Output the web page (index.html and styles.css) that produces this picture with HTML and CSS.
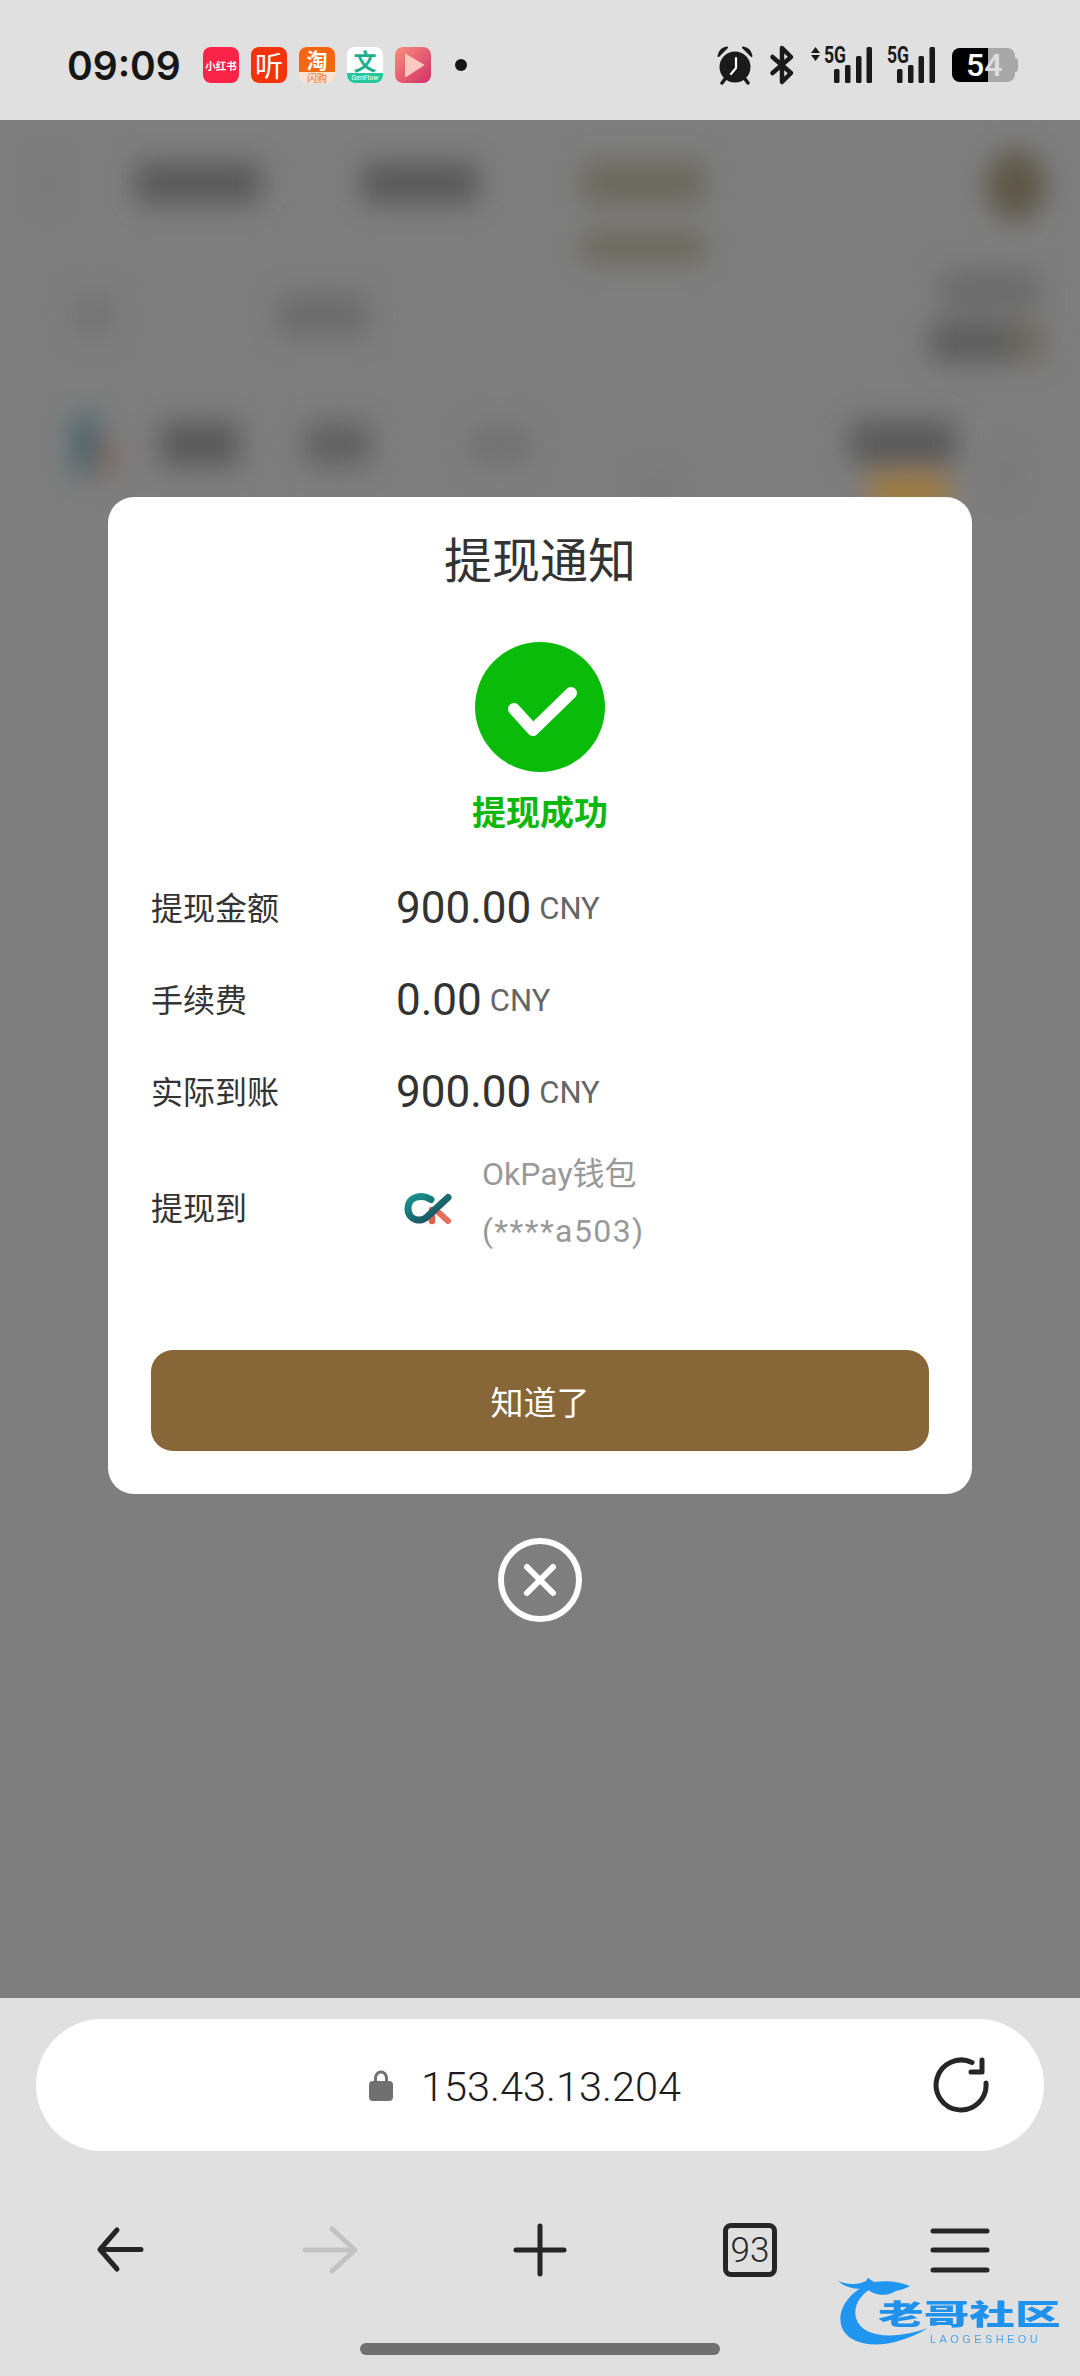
FILE: index.html
```html
<!DOCTYPE html>
<html lang="zh-CN">
<head>
    <meta charset="UTF-8">
    <meta name="viewport" content="width=device-width, initial-scale=1.0">
    <title>提现通知</title>
    <link rel="stylesheet" href="styles.css">
</head>
<body>
    <div class="status-bar">
        <div class="status-left">
            <span class="time">09:09</span>
            <div class="apps">
                <span class="app app-red">小红书</span>
                <span class="app app-ting">听</span>
                <span class="app app-tao"><b>淘</b><i>闪购</i></span>
                <span class="app app-wen"><b>文</b><i>GenFlow</i></span>
                <span class="app app-play">
                    <svg width="36" height="36" viewBox="0 0 36 36"><path d="M11 8 L28 18 L11 29 Z" fill="#ffc9c0" stroke="#ffc9c0" stroke-width="2" stroke-linejoin="round"/></svg>
                </span>
            </div>
            <span class="dot"></span>
        </div>
        <div class="status-right">
            <svg class="alarm" width="36" height="38" viewBox="0 0 36 38">
                <circle cx="18" cy="21" r="15.5" fill="#1a1a1a"/>
                <path d="M1.5 10 Q3 2.500 10 1.500 Z M34.500 10 Q33 2.500 26 1.500 Z" fill="#1a1a1a" stroke="#1a1a1a" stroke-width="2" stroke-linejoin="round"/>
                <path d="M8 33 L5 37 M28 33 L31 37" stroke="#1a1a1a" stroke-width="3.500" stroke-linecap="round"/>
                <path d="M19 12 V22 L14 28" fill="none" stroke="#fff" stroke-width="2.200" stroke-linecap="round" stroke-linejoin="round"/>
            </svg>
            <svg class="bluetooth" width="24" height="38" viewBox="0 0 24 38">
                <path d="M2.500 11 L21 27 L12 36 V2 L21 11 L2.500 27" fill="none" stroke="#1a1a1a" stroke-width="4.500" stroke-linecap="round" stroke-linejoin="round"/>
            </svg>
            <svg class="signal-a" width="61" height="38" viewBox="0 0 61 38">
                <path d="M4.500 1 L9 7 H0 Z M4.500 15 L9 9 H0 Z" fill="#1a1a1a"/>
                <text x="13" y="17" class="five-g" textLength="22" lengthAdjust="spacingAndGlyphs">5G</text>
                <rect x="23" y="23" width="5.500" height="14" rx="1.500" fill="#1a1a1a"/>
                <rect x="34" y="19" width="5.500" height="18" rx="1.500" fill="#1a1a1a"/>
                <rect x="45" y="10" width="5.500" height="27" rx="1.500" fill="#1a1a1a"/>
                <rect x="55.500" y="1" width="5.500" height="36" rx="1.500" fill="#1a1a1a"/>
            </svg>
            <svg class="signal-b" width="48" height="38" viewBox="0 0 48 38">
                <text x="0" y="17" class="five-g" textLength="22" lengthAdjust="spacingAndGlyphs">5G</text>
                <rect x="10" y="23" width="5.500" height="14" rx="1.500" fill="#1a1a1a"/>
                <rect x="21" y="19" width="5.500" height="18" rx="1.500" fill="#1a1a1a"/>
                <rect x="31.500" y="10" width="5.500" height="27" rx="1.500" fill="#1a1a1a"/>
                <rect x="42.500" y="1" width="5.500" height="36" rx="1.500" fill="#1a1a1a"/>
            </svg>
            <div class="battery">
                <div class="battery-body">
                    <span class="battery-fill"></span>
                    <span class="battery-num"><b>5</b><i>4</i></span>
                </div>
                <span class="battery-nub"></span>
            </div>
        </div>
    </div>

    <div class="backdrop">
        <!-- the page behind the dialog, blurred out -->
        <svg class="backdrop-page" width="1080" height="1878" viewBox="0 0 1080 1878">
            <defs>
                <filter id="soft" x="-30%" y="-30%" width="160%" height="160%">
                    <feGaussianBlur stdDeviation="14"/>
                </filter>
            </defs>
            <g filter="url(#soft)">
                <rect x="40" y="46" width="16" height="32" fill="#747474"/>
                <rect x="135" y="42" width="126" height="42" fill="#585858"/>
                <rect x="362" y="42" width="116" height="42" fill="#585858"/>
                <rect x="582" y="42" width="123" height="42" fill="#6b675b"/>
                <rect x="582" y="114" width="123" height="26" fill="#686455"/>
                <ellipse cx="1016" cy="65" rx="30" ry="36" fill="#5d5646"/>
                <rect x="72" y="176" width="42" height="38" fill="#727272"/>
                <rect x="278" y="174" width="90" height="42" fill="#6b6b6b"/>
                <rect x="940" y="150" width="100" height="40" fill="#6a6a6a"/>
                <rect x="930" y="202" width="82" height="40" fill="#5b5b5b"/>
                <rect x="1012" y="202" width="32" height="40" fill="#6d685b"/>
                <rect x="72" y="296" width="28" height="58" fill="#48636a"/>
                <rect x="98" y="320" width="18" height="36" fill="#80665f"/>
                <rect x="160" y="302" width="80" height="44" fill="#595959"/>
                <rect x="305" y="302" width="66" height="44" fill="#606060"/>
                <rect x="470" y="308" width="60" height="34" fill="#707070"/>
                <rect x="850" y="300" width="106" height="46" fill="#5a5a5a"/>
                <rect x="870" y="354" width="78" height="38" fill="#a07c3c"/>
                <rect x="640" y="360" width="30" height="18" fill="#737373"/>
                <rect x="1000" y="336" width="10" height="36" fill="#707070"/>
            </g>
        </svg>

        <div class="modal">
            <div class="dialog">
                <h2 class="dialog-title">提现通知</h2>
                <svg class="check" width="130" height="130" viewBox="0 0 130 130">
                    <circle cx="65" cy="65" r="65" fill="#0abb0a"/>
                    <path d="M39 67 L58 88 L96 51" fill="none" stroke="#fff" stroke-width="12" stroke-linecap="round" stroke-linejoin="round"/>
                </svg>
                <p class="dialog-status">提现成功</p>

                <div class="row">
                    <span class="row-label">提现金额</span>
                    <span class="amount">900.00</span><span class="unit">CNY</span>
                </div>
                <div class="row">
                    <span class="row-label">手续费</span>
                    <span class="amount">0.00</span><span class="unit">CNY</span>
                </div>
                <div class="row">
                    <span class="row-label">实际到账</span>
                    <span class="amount">900.00</span><span class="unit">CNY</span>
                </div>
                <div class="row row-wallet">
                    <span class="row-label">提现到</span>
                    <svg class="wallet-logo" width="48" height="32" viewBox="0 0 48 32">
                        <defs>
                            <linearGradient id="okc" x1="0" y1="0" x2="1" y2="1">
                                <stop offset="0" stop-color="#1a9490"/>
                                <stop offset="1" stop-color="#1a4254"/>
                            </linearGradient>
                        </defs>
                        <path d="M28 28 V17" fill="none" stroke="#e0604c" stroke-width="6.500" stroke-linecap="round"/>
                        <path d="M33 18 L44 28" fill="none" stroke="#e56f5d" stroke-width="6" stroke-linecap="round"/>
                        <path d="M27 6.500 C18 1 4 3 4 15.500 C4 28 18 30 24 23 L44 4.500" fill="none" stroke="url(#okc)" stroke-width="7" stroke-linecap="round"/>
                    </svg>
                    <div class="wallet-name">
                        <span>OkPay钱包</span>
                        <span class="wallet-no">(****a503)</span>
                    </div>
                </div>

                <button class="dialog-btn">知道了</button>
            </div>
            <svg class="close" width="84" height="84" viewBox="0 0 84 84">
                <circle cx="42" cy="42" r="39" fill="none" stroke="#fff" stroke-width="6"/>
                <path d="M29 29 L55 55 M55 29 L29 55" stroke="#fff" stroke-width="6" stroke-linecap="round"/>
            </svg>
        </div>
    </div>

    <div class="bottom">
        <div class="url-bar">
            <svg class="lock" width="26" height="32" viewBox="0 0 26 32">
                <path d="M7.500 14 V8 A5.500 6 0 0 1 18.500 8 V14" fill="none" stroke="#707070" stroke-width="3"/>
                <rect x="1" y="11" width="24" height="20" rx="4" fill="#707070"/>
            </svg>
            <span class="url">153.43.13.204</span>
            <svg class="reload" width="60" height="60" viewBox="0 0 60 60">
                <path d="M41 7.500 A25 25 0 1 0 55 28" fill="none" stroke="#262626" stroke-width="5" stroke-linecap="round"/>
                <path d="M51 5 V17 H40" fill="none" stroke="#262626" stroke-width="5" stroke-linecap="round" stroke-linejoin="round"/>
            </svg>
        </div>

        <div class="toolbar">
            <svg width="60" height="60" viewBox="0 0 60 60" class="tool-icon">
                <path d="M27 10 L10 29.500 L27 49 M10 29.500 H51" fill="none" stroke="#262626" stroke-width="5" stroke-linecap="round" stroke-linejoin="round"/>
            </svg>
            <svg width="60" height="60" viewBox="0 0 60 60" class="tool-icon">
                <path d="M32 9 L55 30 L32 51 M55 30 H5" fill="none" stroke="#c2c2c2" stroke-width="5" stroke-linecap="round" stroke-linejoin="round"/>
            </svg>
            <svg width="60" height="60" viewBox="0 0 60 60" class="tool-icon">
                <path d="M6 30 H54 M30 6 V54" fill="none" stroke="#262626" stroke-width="5" stroke-linecap="round"/>
            </svg>
            <div class="tabs">93</div>
            <svg width="60" height="60" viewBox="0 0 60 60" class="tool-icon">
                <path d="M3 11 H57 M3 30 H57 M3 50 H57" fill="none" stroke="#262626" stroke-width="5" stroke-linecap="round"/>
            </svg>
        </div>

        <div class="home-bar"></div>

        <div class="watermark">
            <svg class="dragon" width="120" height="72" viewBox="0 0 120 72">
                <path d="M30 6 C8 16 -3 36 5 52 C16 71 54 72 90 50 C56 62 24 60 18 40 C15 28 22 16 36 9 Z" fill="#2196f0"/>
                <path d="M0 3 C10 7 20 7 28 3 L30 0 L36 4 C50 2 62 4 72 8 C66 12 58 12 54 15 C44 19 34 16 28 10 C18 12 8 10 0 3 Z" fill="#2196f0"/>
            </svg>
            <span class="wm-name">老哥社区</span>
            <span class="wm-sub">LAOGESHEOU</span>
        </div>
    </div>
</body>
</html>
```

FILE: styles.css
```css
* {
    box-sizing: border-box;
}

body {
    margin: 0;
    width: 1080px;
    height: 2376px;
    overflow: hidden;
    background: #e0e0e0;
    font-family: Roboto, "Noto Sans CJK SC", sans-serif;
    color: #333;
}

/* status bar */
.status-bar {
    height: 120px;
    padding: 10px 62px 0 67px;
    display: flex;
    align-items: center;
    justify-content: space-between;
    background: #e0e0e0;
}

.status-left, .status-right {
    display: flex;
    align-items: center;
}

.time {
    font-family: Inter, sans-serif;
    font-size: 39px;
    font-weight: 600;
    color: #161616;
    width: 136px;
}

.apps {
    display: flex;
    gap: 12px;
}

.app {
    width: 36px;
    height: 36px;
    border-radius: 8px;
    display: flex;
    flex-direction: column;
    align-items: center;
    justify-content: center;
    font-family: "Noto Sans CJK SC", sans-serif;
    color: #fff;
}

.app b, .app i {
    font-style: normal;
    display: block;
    text-align: center;
    width: 100%;
}

.app-red {
    background: #fb2347;
    font-size: 10.5px;
    font-weight: 700;
}

.app-ting {
    background: #f2340c;
    font-size: 28px;
    line-height: 36px;
}

.app-tao {
    background: #fbe3cf;
}

.app-tao b {
    border-radius: 8px 8px 0 0;
    background: linear-gradient(#f9620f, #ee6a10);
    font-size: 21px;
    line-height: 25px;
    height: 25px;
}

.app-tao i {
    color: #e8732a;
    font-size: 10px;
    line-height: 11px;
    height: 11px;
}

.app-wen {
    background: #fff;
}

.app-wen b {
    color: #1cb08c;
    font-size: 23px;
    line-height: 26px;
    height: 26px;
}

.app-wen i {
    border-radius: 0 0 8px 8px;
    background: #25c79a;
    font-family: Roboto, sans-serif;
    font-size: 7px;
    line-height: 10px;
    height: 10px;
}

.app-play {
    background: linear-gradient(135deg, #f9907c, #d22f68);
}

.dot {
    width: 12px;
    height: 12px;
    border-radius: 50%;
    background: #161616;
    margin-left: 24px;
}

.status-right svg {
    display: block;
    overflow: visible;
}

.bluetooth {
    margin-left: 17px;
}

.signal-a {
    margin-left: 17px;
}

.signal-b {
    margin-left: 15px;
}

.five-g {
    font-family: Roboto, sans-serif;
    font-size: 23px;
    font-weight: 700;
    fill: #1a1a1a;
}

.battery {
    margin-left: 17px;
    display: flex;
    align-items: center;
}

.battery-body {
    position: relative;
    width: 63px;
    height: 34px;
    border-radius: 8px;
    background: #a8a8a8;
}

.battery-fill {
    display: block;
    width: 36px;
    height: 100%;
    border-radius: 8px 0 0 8px;
    background: #000;
}

.battery-num {
    position: absolute;
    left: 14px;
    top: 0;
    font-size: 32px;
    line-height: 34px;
    font-weight: 500;
}

.battery-num b {
    font-weight: 500;
    color: #fff;
}

.battery-num i {
    font-style: normal;
    color: #dedede;
}

.battery-nub {
    width: 3px;
    height: 14px;
    border-radius: 0 3px 3px 0;
    background: #a8a8a8;
}

/* dimmed page and dialog */
.backdrop {
    position: relative;
    height: 1878px;
    background: #7e7e7e;
    overflow: hidden;
}

.backdrop-page {
    display: block;
}

.modal {
    position: absolute;
    left: 108px;
    top: 377px;
    width: 864px;
    display: flex;
    flex-direction: column;
    align-items: center;
    gap: 44px;
}

.dialog {
    width: 100%;
    padding: 30px 43px 43px;
    background: #fff;
    border-radius: 26px;
    display: flex;
    flex-direction: column;
    font-family: Roboto, "Noto Sans CJK SC", sans-serif;
}

.dialog-title {
    margin: 0;
    font-size: 48px;
    font-weight: 400;
    line-height: 70px;
    text-align: center;
    color: #333;
}

.check {
    display: block;
    margin: 45px auto 0;
}

.dialog-status {
    margin: 16px 0 24px;
    font-size: 34px;
    font-weight: 700;
    line-height: 50px;
    text-align: center;
    color: #0db80d;
}

.row {
    height: 92px;
    display: flex;
    align-items: center;
}

.row-label {
    width: 245px;
    margin-top: -5px;
    font-size: 32px;
    color: #333;
}

.amount {
    font-size: 44px;
    color: #333;
}

.unit {
    margin-left: 8px;
    font-size: 31px;
    color: #666;
}

.row-wallet {
    height: 114px;
    margin-top: 8px;
}

.row-wallet .row-label {
    padding-top: 10px;
}

.wallet-logo {
    display: block;
    margin: 12px 0 0 8px;
}

.wallet-name {
    margin-left: 30px;
    display: flex;
    flex-direction: column;
    font-size: 32px;
    line-height: 57px;
    color: #999;
}

.wallet-no {
    letter-spacing: 1.4px;
}

.dialog-btn {
    margin-top: 90px;
    height: 101px;
    width: 100%;
    border: none;
    border-radius: 22px;
    background: #876638;
    color: #fff;
    font-family: "Noto Sans CJK SC", sans-serif;
    font-size: 33px;
}

.close {
    display: block;
}

/* browser bar */
.bottom {
    position: relative;
    height: 378px;
    padding-top: 21px;
    background: #e0e0e0;
}

.url-bar {
    margin: 0 36px;
    height: 132px;
    padding: 0 53px 0 332px;
    background: #fff;
    border-radius: 66px;
    display: flex;
    align-items: center;
}

.lock {
    display: block;
    margin-top: 2px;
}

.url {
    margin-left: 27px;
    margin-top: 2px;
    font-size: 41.5px;
    font-weight: 300;
    color: #1c1c1c;
}

.reload {
    display: block;
    margin-left: auto;
}

.toolbar {
    margin-top: 69px;
    padding: 0 15px;
    display: grid;
    grid-template-columns: repeat(5, 1fr);
    justify-items: center;
    align-items: center;
}

.tool-icon {
    display: block;
}

.tabs {
    width: 54px;
    height: 54px;
    border: 5px solid #262626;
    border-radius: 8px;
    display: flex;
    align-items: center;
    justify-content: center;
    font-size: 35px;
    font-weight: 300;
    color: #262626;
}

.home-bar {
    width: 360px;
    height: 12px;
    margin: 63px auto 0;
    border-radius: 6px;
    background: #707070;
}

.watermark {
    position: absolute;
    left: 838px;
    top: 280px;
    width: 224px;
    height: 72px;
    filter: blur(0.5px);
}

.dragon {
    position: absolute;
    left: 0;
    top: 0;
}

.wm-name {
    position: absolute;
    left: 40px;
    top: 18px;
    font-family: "Noto Sans CJK SC", sans-serif;
    font-size: 28px;
    line-height: 34px;
    font-weight: 900;
    white-space: nowrap;
    color: #1f92ee;
    transform: scaleX(1.63);
    transform-origin: left center;
}

.wm-sub {
    position: absolute;
    left: 92px;
    top: 55px;
    font-family: "Liberation Sans", sans-serif;
    font-size: 11px;
    line-height: 12px;
    letter-spacing: 3.4px;
    white-space: nowrap;
    color: #4ba6ea;
}
```
